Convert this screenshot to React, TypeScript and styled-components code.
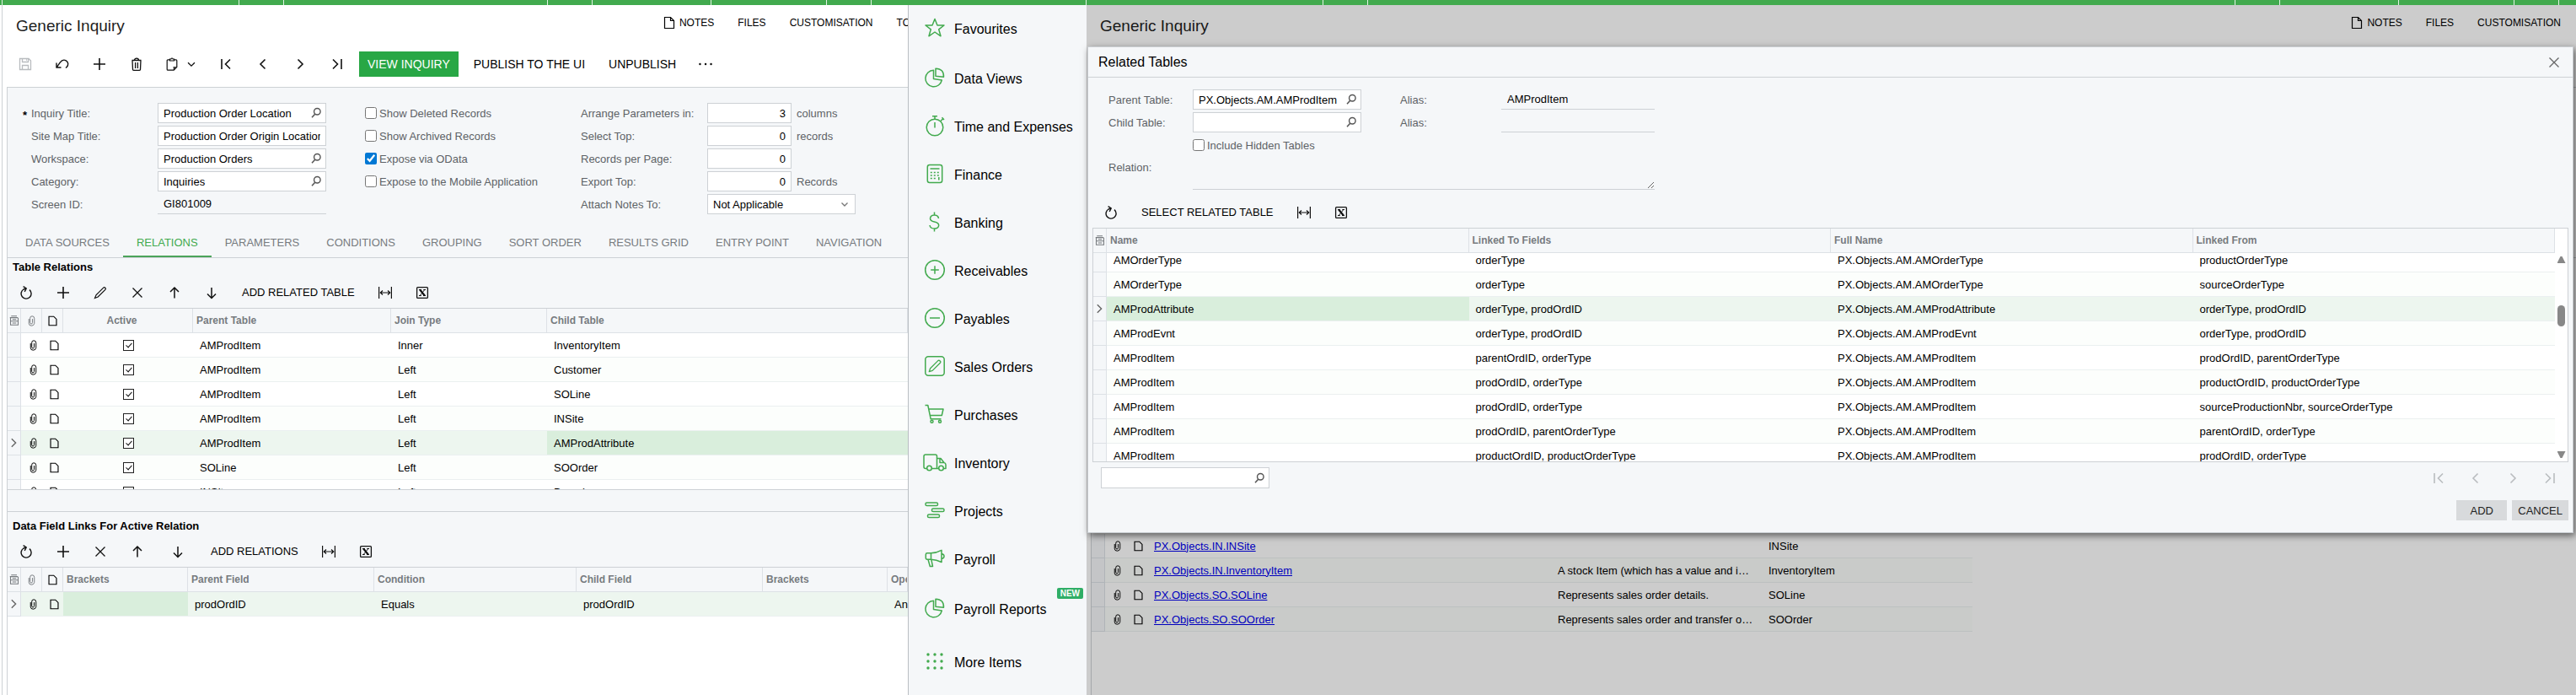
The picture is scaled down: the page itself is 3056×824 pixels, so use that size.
import React, { useLayoutEffect, useRef } from "react";
import styled, { createGlobalStyle, css } from "styled-components";

const GlobalStyle = createGlobalStyle`
  *, *::before, *::after { box-sizing: border-box; }
  body { margin: 0; background: #fff; color: #000; }
  body, button, input, select, textarea {
    font-family: "Liberation Sans", Arial, sans-serif;
    font-size: 13px;
  }
`;

const color = {
  brand: "#42aa4e",
  accent: "#28a745",
  surface: "#f5f7f9",
  line: "#cdd1d5",
  lineSoft: "#dde1e6",
  rowLine: "#ebf0f0",
  label: "#5d6266",
  muted: "#777b7f",
  rowSelected: "#edf6ef",
  cellActive: "#d9eedc",
};

/* ---------- icons ---------- */

const Svg = styled.svg`
  display: block;
  flex: none;
  fill: none;
  stroke: currentColor;
  stroke-width: 1.3;
`;

type IconName = keyof typeof shapes;

const shapes = {
  save: (
    <>
      <path d="M1.5 1.5H12L14.5 4V14.5H1.5Z" />
      <path d="M4.5 1.5V5.5H11.5V1.5M9 3H10M4.5 14.5V9.5H11.5V14.5" />
    </>
  ),
  undo: <path strokeWidth="1.4" d="M1 6.5V12H6.5M1.2 11.8L5.2 6.2C7.5 3 10 2.5 12.3 3.8C15.2 5.5 15.5 9 13.2 11.4L12 12.6" />,
  plus: <path strokeWidth="1.6" d="M8 1V15M1 8H15" />,
  trash: <path d="M2.5 3.5H13.5M5.5 3.5C5.5.3 10.5.3 10.5 3.5M3 3.5L3.5 14.5Q3.5 15.3 4.5 15.3H11.5Q12.5 15.3 12.5 14.5L13 3.5M6.6 6V13M9.4 6V13" />,
  clipboard: <path strokeWidth="1.2" d="M5.5 2.8H3.2Q2.2 2.8 2.2 3.8V14.2Q2.2 15.2 3.2 15.2H10.2L13.8 11.6V3.8Q13.8 2.8 12.8 2.8H10.5M5.5 4V2H6.8Q8 0 9.2 2H10.5V4ZM10.2 15.2Q10.8 13.5 10.3 11.8Q12 12.2 13.8 11.6" />,
  caret: <path strokeWidth="1.5" d="M3.5 6L8 10.5L12.5 6" />,
  smallCaret: <path strokeWidth="1.3" stroke="#777" d="M4.5 6.5L8 10L11.5 6.5" />,
  first: <path strokeWidth="1.6" d="M3 2V14M13 2.5L7.5 8L13 13.5" />,
  prev: <path strokeWidth="1.6" d="M10.5 2.5L5 8L10.5 13.5" />,
  next: <path strokeWidth="1.6" d="M5.5 2.5L11 8L5.5 13.5" />,
  last: <path strokeWidth="1.6" d="M13 2V14M3 2.5L8.5 8L3 13.5" />,
  dots: <path strokeWidth="2.4" strokeLinecap="round" d="M1.4 8H1.5M8 8H8.1M14.5 8H14.6" />,
  refresh: <path strokeWidth="1.4" d="M12 4.6A6 6 0 1 1 5 4L7.6 3.2M4.6.7L8.2 3L6.2 6.8" />,
  pencil: <path strokeWidth="1.2" d="M1.5 14.5L3 10.8L11.7 2.1Q12.7 1.2 13.8 2.2T13.9 4.3L5.2 13Z" />,
  cross: <path d="M2.5 2.5L13.5 13.5M13.5 2.5L2.5 13.5" />,
  up: <path strokeWidth="1.5" d="M8 14.5V2.5M3 7L8 2L13 7" />,
  down: <path strokeWidth="1.5" d="M8 2V14M3 9.5L8 14.5L13 9.5" />,
  fit: <path strokeWidth="1.2" d="M.6 1V15M15.4 1V15M2.5 8H13.5M5 5.5L2.3 8L5 10.5M11 5.5L13.7 8L11 10.5" />,
  excel: (
    <>
      <rect x="1.6" y="1.6" width="12.8" height="12.8" rx="1" />
      <path strokeWidth="2.2" d="M5.2 4.5L10.8 11.5" />
      <path strokeWidth="1" d="M10.8 4.5L5.2 11.5M4 4.5H7M9.3 4.5H12M4 11.5H6.8M9 11.5H12" />
    </>
  ),
  search: (
    <>
      <circle cx="9.5" cy="6" r="4.3" strokeWidth="1.6" />
      <path strokeWidth="1.8" d="M6.5 9.5L2.3 14" />
    </>
  ),
  clip: <path strokeWidth="1.2" d="M4 5V11.5Q4 15 7.8 15T12 11.5V4.5Q12 1 8.8 1T5.8 4V10.5Q5.8 12.3 7.5 12.3T9.3 10.5V5" />,
  note: <path strokeWidth="1.2" d="M2.5 1.5H9.5L13.5 5.5V14.5H2.5ZM9.5 1.5V5.5H13.5" />,
  page: <path strokeWidth="1.4" d="M2.5 1.5H9.5L13.5 5.5V14.5H2.5Z" />,
  form: (
    <>
      <path strokeWidth="1.4" d="M3 1H12M1 3.5H13.5M2 3.5V15H14V3.5M2 9H14" />
      <path strokeWidth="1.6" d="M5 6.3H11M5 12H11" />
    </>
  ),
} as const;

function Icon({ name, size = 16 }: { name: IconName; size?: number }) {
  return (
    <Svg width={size} height={size} viewBox="0 0 16 16" aria-hidden="true">
      {shapes[name]}
    </Svg>
  );
}

const dotRows = [6, 14, 22];

const menuShapes = {
  star: <path d="M14 3.5L17 11H25L18.7 15.8L21 23.8L14 19L7 23.8L9.3 15.8L3 11H11Z" />,
  pie: (
    <>
      <path d="M12.5 5.2A9.8 9.8 0 1 0 22.3 17L12.5 15.5Z" />
      <path d="M15 3.2V12.3L24.5 13.2Q24.8 3.4 15 3.2Z" />
    </>
  ),
  stopwatch: (
    <>
      <circle cx="14" cy="16" r="9.8" />
      <path d="M11 2.8H17M14 3V6M14 10V16.5M21 8.5L24 5.5M22.5 4.3L25 7" />
    </>
  ),
  calculator: (
    <>
      <rect x="5.3" y="3.5" width="17.4" height="21" rx="2.5" />
      <path d="M8.5 8H19.5" />
      <path strokeDasharray="2 2" d="M8.8 12.5H19.5M8.8 16H19.5M8.8 19.5H15.5" />
      <path d="M18.8 18V21.5" />
    </>
  ),
  dollar: <path d="M13.5 2.5V6M13.5 22V25.5M18.5 10Q18 6 13.5 6T8.5 10Q8.5 13 13.5 14T18.7 18Q18.5 22 13.5 22T8 18" />,
  plusCircle: (
    <>
      <circle cx="14" cy="14" r="11.3" />
      <path d="M14 9.2V18.8M9.2 14H18.8" />
    </>
  ),
  minusCircle: (
    <>
      <circle cx="14" cy="14" r="11.3" />
      <path d="M8 14H20" />
    </>
  ),
  edit: (
    <>
      <rect x="2.8" y="2.8" width="22.4" height="22.4" rx="3.5" />
      <path strokeWidth="1.3" d="M7.3 20.7L8.6 16.8L17.8 7.6Q18.9 6.7 20.2 7.9T20.4 10.2L11.2 19.4Z" />
    </>
  ),
  cart: (
    <>
      <path d="M2.5 3.5H5.8L9.2 19.8H21.5M6.8 8H24L22.3 15.5H8.3" />
      <circle cx="10.5" cy="22.8" r="1.5" />
      <circle cx="20" cy="22.8" r="1.5" />
    </>
  ),
  truck: (
    <>
      <path d="M4.5 21.5H3Q1 21.5 1 19.5V7Q1 5 3 5H14.8Q16.5 5 16.5 7V21.5H10.5M16.5 9.5H21L25 14.5Q27 15 27 17V21.5H24.5M18.5 21.5H16.5M20 9.5V14.5H25" />
      <circle cx="7.5" cy="21" r="2.8" />
      <circle cx="21.5" cy="21" r="2.8" />
    </>
  ),
  bars: (
    <>
      <rect x="3" y="5" width="14.5" height="3.6" rx="1.6" />
      <rect x="10.5" y="12" width="14.5" height="3.6" rx="1.6" />
      <rect x="5.5" y="19" width="14" height="3.6" rx="1.6" />
    </>
  ),
  megaphone: (
    <path d="M3.3 9.5Q3.3 7.8 5 7.8H9.5Q16 7.5 22 4.3V18.5Q16 15.5 9.5 15.2H5Q3.3 15.2 3.3 13.5ZM9.5 7.8V15.2M22 8.5Q25 9 25 11.5T22 14.5M6 15.2L8.3 23.5H11.5L9.8 15.2" />
  ),
  grid: (
    <g fill="currentColor" stroke="none">
      {dotRows.map((y) =>
        dotRows.map((x) => <circle key={`${x}-${y}`} cx={x} cy={y} r="1.7" />)
      )}
    </g>
  ),
} as const;

const MenuSvg = styled(Svg)`
  color: ${color.brand};
  stroke-width: 1.5;
  stroke-linejoin: round;
  margin-bottom: 4px;
`;

/* ---------- page frame ---------- */

const Layout = styled.div`
  display: grid;
  grid-template-columns: minmax(0, 1077fr) 212px minmax(0, 1767fr);
  min-height: 100vh;
`;

const Page = styled.main`
  position: relative;
  display: flex;
  flex-direction: column;
  min-width: 0;
`;

const TabStrip = styled.div`
  display: flex;
  flex: none;
  height: 6px;
  background: ${color.brand};
`;

const StripTab = styled.span<{ $width?: number }>`
  flex: ${(p) => (p.$width ? `none` : `1`)};
  width: ${(p) => (p.$width ? `${p.$width}px` : "auto")};
  border-right: 1px solid #e4f3e6;
  &:last-child { border-right: 0; }
`;

const PageBody = styled.div<{ $framed?: boolean }>`
  flex: 1;
  display: flex;
  flex-direction: column;
  min-width: 0;
  ${(p) => p.$framed && css`
    margin-left: 2px;
    border-left: 1px solid ${color.line};
  `}
`;

const Header = styled.header`
  display: flex;
  align-items: center;
  justify-content: space-between;
  height: 50px;
  padding-left: 16px;
  overflow: hidden;
`;

const Title = styled.h1`
  margin: 0;
  font-size: 19px;
  font-weight: 400;
  color: #222;
`;

const HeaderLinks = styled.div<{ $overhang: number }>`
  display: flex;
  flex: none;
  padding-bottom: 8px;
  margin-right: ${(p) => -p.$overhang}px;
`;

const HeaderLink = styled.button`
  display: flex;
  align-items: center;
  gap: 4px;
  padding: 0 14px;
  border: 0;
  background: none;
  font-size: 12px;
  line-height: 16px;
  white-space: nowrap;
`;

/* ---------- toolbars ---------- */

const Toolbar = styled.div<{ $main?: boolean }>`
  display: flex;
  align-items: center;
  flex: none;
  height: ${(p) => (p.$main ? 40 : 37)}px;
  ${(p) => p.$main && css`
    padding-left: 5px;
    margin-bottom: 7px;
  `}
`;

const IconButton = styled.button<{ $width?: number; $dim?: boolean }>`
  display: flex;
  align-items: center;
  justify-content: center;
  gap: 8px;
  flex: none;
  width: ${(p) => p.$width ?? 44}px;
  height: 30px;
  padding: 0;
  border: 0;
  background: none;
  color: ${(p) => (p.$dim ? "#b9bcbf" : "#111")};
`;

const ActionGroup = styled.div`
  display: flex;
  align-items: center;
  gap: 8px;
  margin-left: 4px;
`;

const ActionButton = styled.button<{ $primary?: boolean }>`
  flex: none;
  height: 30px;
  padding: 0 10px;
  border: 0;
  font-size: 14px;
  white-space: nowrap;
  background: ${(p) => (p.$primary ? color.accent : "none")};
  color: ${(p) => (p.$primary ? "#fff" : "#000")};
`;

const TextButton = styled.button`
  flex: none;
  height: 30px;
  padding: 0 14px;
  border: 0;
  background: none;
  white-space: nowrap;
`;

/* ---------- forms ---------- */

const Panel = styled.div`
  flex: 1;
  display: flex;
  flex-direction: column;
  min-width: 0;
  margin-left: 5px;
  border: solid ${color.line};
  border-width: 1px 0 0 1px;
`;

const FormArea = styled.form`
  display: flex;
  padding: 18px 0 15px 18px;
  background: ${color.surface};
`;

const FormColumn = styled.div<{ $width?: number }>`
  display: flex;
  flex-direction: column;
  gap: 3px;
  flex: none;
  ${(p) => p.$width && `width: ${p.$width}px;`}
`;

const FormRow = styled.div`
  display: flex;
  align-items: center;
  height: 24px;
`;

const Required = styled.span`
  width: 10px;
  padding-top: 4px;
  font-weight: 700;
`;

const FieldLabel = styled.label<{ $width: number }>`
  width: ${(p) => p.$width}px;
  color: ${color.label};
  white-space: nowrap;
`;

const FieldBox = styled.span<{ $width: number; $height?: number }>`
  display: flex;
  align-items: center;
  width: ${(p) => p.$width}px;
  height: ${(p) => p.$height ?? 24}px;
  padding-right: 4px;
  border: 1px solid ${color.line};
  background: #fff;
  color: #555;
`;

const FieldInput = styled.input<{ $right?: boolean }>`
  flex: 1;
  min-width: 0;
  height: 100%;
  padding: 0 2px 0 6px;
  border: 0;
  background: none;
  color: #000;
  text-align: ${(p) => (p.$right ? "right" : "left")};
`;

const PlainField = styled.input<{ $width: number }>`
  width: ${(p) => p.$width}px;
  height: 24px;
  padding: 0 7px;
  border: 0;
  border-bottom: 1px solid ${color.line};
  background: none;
`;

const SelectInput = styled.select`
  flex: 1;
  height: 100%;
  padding: 0 6px;
  border: 0;
  background: none;
  appearance: none;
`;

const Suffix = styled.span`
  margin-left: 6px;
  color: ${color.label};
`;

const CheckLabel = styled.label`
  display: flex;
  align-items: center;
  gap: 3px;
  height: 24px;
  color: ${color.label};
  white-space: nowrap;
`;

const NativeCheck = styled.input`
  width: 14px;
  height: 14px;
  margin: 0;
  accent-color: #0078d4;
`;

function TextField(props: {
  id: string;
  value: string;
  width?: number;
  height?: number;
  lookup?: boolean;
  right?: boolean;
  label?: string;
}) {
  return (
    <FieldBox $width={props.width ?? 200} $height={props.height}>
      <FieldInput id={props.id} defaultValue={props.value} $right={props.right} aria-label={props.label} />
      {props.lookup && <Icon name="search" size={14} />}
    </FieldBox>
  );
}

/* ---------- tabs and sections ---------- */

const Tabs = styled.div`
  display: flex;
  flex: none;
  height: 37px;
  padding-left: 5px;
  border-bottom: 1px solid ${color.line};
  background: ${color.surface};
  overflow: hidden;
`;

const Tab = styled.button<{ $active?: boolean }>`
  flex: none;
  height: 37px;
  padding: 0 16px;
  border: 0;
  background: none;
  white-space: nowrap;
  color: ${(p) => (p.$active ? color.brand : color.muted)};
  box-shadow: ${(p) => (p.$active ? `inset 0 -3px 0 #4ba35a` : "none")};
`;

const Section = styled.section<{ $ruled?: boolean }>`
  flex: none;
  background: ${color.surface};
  ${(p) => p.$ruled && css`
    padding-top: 6px;
    border-top: 1px solid ${color.line};
  `}
`;

const SectionTitle = styled.h2`
  margin: 0;
  padding-left: 6px;
  font-size: 13px;
  font-weight: 700;
  line-height: 22px;
`;

const Splitter = styled.div`
  flex: none;
  height: 25px;
  background: ${color.surface};
`;

/* ---------- data grids ---------- */

const GridFrame = styled.div<{ $height?: number }>`
  border-top: 1px solid ${color.line};
  background: #fff;
  overflow: hidden;
  ${(p) => p.$height && css`
    height: ${p.$height}px;
    border-bottom: 1px solid ${color.line};
  `}
`;

const Table = styled.table<{ $width?: number }>`
  width: ${(p) => (p.$width ? `${p.$width}px` : "100%")};
  table-layout: fixed;
  border-collapse: separate;
  border-spacing: 0;
`;

const Head = styled.th<{ $center?: boolean }>`
  position: sticky;
  top: 0;
  z-index: 1;
  height: 29px;
  padding: 0 0 0 4px;
  border: solid ${color.lineSoft};
  border-width: 0 1px 1px 0;
  background: ${color.surface};
  color: ${color.muted};
  font-size: 12px;
  text-align: left;
  white-space: nowrap;
  overflow: hidden;
  ${(p) => p.$center && css`
    padding: 0 14px 0 0;
    text-align: center;
  `}
`;

const IconHead = styled(Head)<{ $dark?: boolean }>`
  padding: 0;
  color: ${(p) => (p.$dark ? "#000" : color.muted)};
  ${Svg} { margin: 0 auto; }
`;

const Row = styled.tr<{ $selected?: boolean }>`
  background: ${(p) => (p.$selected ? color.rowSelected : "#fff")};
  &:nth-child(even) {
    background: ${(p) => (p.$selected ? color.rowSelected : "#fcfefc")};
  }
`;

const Cell = styled.td<{ $active?: boolean; $center?: boolean }>`
  height: 29px;
  padding: 0 10px 0 8px;
  border-bottom: 1px solid ${color.rowLine};
  white-space: nowrap;
  overflow: hidden;
  text-overflow: ellipsis;
  ${(p) => p.$active && `background: ${color.cellActive};`}
  ${(p) => p.$center && css`
    padding: 0;
    text-align: center;
  `}
`;

const EdgeCell = styled(Cell)`
  padding: 0;
  text-overflow: clip;
`;

const Marker = styled.td`
  height: 29px;
  padding: 0;
  border: solid ${color.lineSoft};
  border-width: 0 1px 1px 0;
  background: ${color.surface};
  color: #666;
`;

const IconCell = styled(Cell)`
  padding: 0 0 0 3px;
  text-overflow: clip;
  ${Svg} { margin: 0 auto; }
`;

const EdgeText = styled.span`
  padding-left: 8px;
`;

const GridCheck = styled.input`
  position: relative;
  display: block;
  width: 13px;
  height: 13px;
  margin: 0 auto;
  border: 1px solid #222;
  background: #fff;
  appearance: none;
  &:checked::after {
    content: "";
    position: absolute;
    left: 4px;
    top: 1px;
    width: 4px;
    height: 7px;
    border: solid #111;
    border-width: 0 1px 1px 0;
    transform: rotate(42deg);
  }
`;

function AttachHeads() {
  return (
    <>
      <IconHead><Icon name="form" size={12} /></IconHead>
      <IconHead><Icon name="clip" size={13} /></IconHead>
      <IconHead $dark><Icon name="page" size={13} /></IconHead>
    </>
  );
}

function AttachCells({ selected }: { selected?: boolean }) {
  return (
    <>
      <Marker>{selected && <Icon name="next" size={14} />}</Marker>
      <IconCell><Icon name="clip" size={13} /></IconCell>
      <IconCell><Icon name="page" size={13} /></IconCell>
    </>
  );
}

function Columns({ widths }: { widths: (number | undefined)[] }) {
  return (
    <colgroup>
      {widths.map((w, i) => (
        <col key={i} width={w} />
      ))}
    </colgroup>
  );
}

/* ---------- side menu ---------- */

const SideMenu = styled.nav`
  display: flex;
  flex-direction: column;
  border-left: 1px solid #b9bec3;
  background: ${color.surface};
`;

const MenuStrip = styled(TabStrip)`
  margin-left: -1px;
  border-right: 1px solid #e4f3e6;
`;

const MenuItem = styled.a<{ $size: "normal" | "tall" | "last" }>`
  position: relative;
  display: flex;
  align-items: center;
  gap: 9px;
  height: ${(p) => ({ normal: 57, tall: 59, last: 70 }[p.$size])}px;
  padding-left: 17px;
  padding-top: ${(p) => (p.$size === "tall" ? 3 : 0)}px;
  color: #000;
  font-size: 16px;
  text-decoration: none;
  white-space: nowrap;
`;

const Badge = styled.span`
  position: absolute;
  top: 5px;
  right: 4px;
  padding: 0 4px;
  border-radius: 2px;
  background: #2fae66;
  color: #fff;
  font-size: 10px;
  font-weight: 700;
  line-height: 13px;
`;

/* ---------- dialog ---------- */

const Shade = styled.div`
  position: absolute;
  inset: 6px 0 0 0;
  background: rgba(0, 0, 0, 0.2);
`;

const Dialog = styled.div`
  position: absolute;
  top: 55px;
  left: 1px;
  right: 3px;
  border: 1px solid #c9cdd1;
  background: ${color.surface};
  box-shadow: 2px 3px 8px rgba(0, 0, 0, 0.55);
`;

const DialogHeader = styled.div`
  display: flex;
  align-items: center;
  justify-content: space-between;
  height: 36px;
  padding: 0 0 0 12px;
  border-bottom: 1px solid ${color.line};
`;

const DialogTitle = styled.h2`
  margin: 0;
  font-size: 16px;
  font-weight: 400;
`;

const CloseButton = styled(IconButton)`
  color: #666;
`;

const DialogForm = styled.form`
  display: flex;
  flex-direction: column;
  gap: 3px;
  padding: 14px 0 8px 24px;
`;

const Indented = styled.div`
  padding-left: 100px;
`;

const AliasGroup = styled.div`
  display: flex;
  align-items: center;
  margin-left: 46px;
`;

const RelationRow = styled.div`
  display: flex;
  align-items: flex-start;
  line-height: 24px;
`;

const RelationText = styled.textarea`
  width: 548px;
  height: 38px;
  padding: 0;
  border: 0;
  border-bottom: 1px solid ${color.line};
  background: none;
`;

const DialogToolbar = styled(Toolbar)`
  padding-left: 5px;
`;

const ScrollFrame = styled.div`
  display: flex;
  height: 278px;
  margin: 0 5px;
  border: 1px solid ${color.line};
  background: #fff;
`;

const ScrollView = styled.div`
  flex: 1;
  min-width: 0;
  overflow: hidden;
`;

const ScrollBar = styled.div`
  display: flex;
  flex-direction: column;
  align-items: center;
  width: 15px;
  padding: 33px 0 4px;
`;

const ScrollArrow = styled.span<{ $down?: boolean }>`
  width: 10px;
  height: 8px;
  background: #888;
  clip-path: ${(p) =>
    p.$down ? "polygon(0 0, 100% 0, 60% 100%, 40% 100%)" : "polygon(40% 0, 60% 0, 100% 100%, 0 100%)"};
`;

const ScrollTrack = styled.span`
  flex: 1;
  padding-top: 50px;
`;

const ScrollThumb = styled.span`
  display: block;
  width: 9px;
  height: 25px;
  border-radius: 5px;
  background: #888;
`;

const DialogFooter = styled.div`
  display: flex;
  align-items: center;
  justify-content: space-between;
  height: 37px;
  padding: 0 5px 0 15px;
`;

const Pager = styled.div`
  display: flex;
`;

const DialogActions = styled.div`
  display: flex;
  justify-content: flex-end;
  gap: 6px;
  padding: 8px 5px 14px;
`;

const DialogButton = styled.button`
  min-width: 60px;
  height: 24px;
  padding: 0 7px;
  border: 0;
  background: #d8dadc;
  color: #222;
`;

const BackForm = styled.div`
  flex: none;
  height: 202px;
  border-bottom: 1px solid ${color.line};
`;

const BackGrid = styled.div`
  padding-top: 327px;
`;

const ObjectLink = styled.a`
  color: #0000ee;
`;

/* ---------- data ---------- */

const tabs = [
  "DATA SOURCES", "RELATIONS", "PARAMETERS", "CONDITIONS", "GROUPING",
  "SORT ORDER", "RESULTS GRID", "ENTRY POINT", "NAVIGATION",
];

const relations = [
  ["AMProdItem", "Inner", "InventoryItem"],
  ["AMProdItem", "Left", "Customer"],
  ["AMProdItem", "Left", "SOLine"],
  ["AMProdItem", "Left", "INSite"],
  ["AMProdItem", "Left", "AMProdAttribute"],
  ["SOLine", "Left", "SOOrder"],
  ["INSite", "Left", "Branch"],
];

const related = [
  ["AMOrderType", "orderType", "productOrderType"],
  ["AMOrderType", "orderType", "sourceOrderType"],
  ["AMProdAttribute", "orderType, prodOrdID", "orderType, prodOrdID"],
  ["AMProdEvnt", "orderType, prodOrdID", "orderType, prodOrdID"],
  ["AMProdItem", "parentOrdID, orderType", "prodOrdID, parentOrderType"],
  ["AMProdItem", "prodOrdID, orderType", "productOrdID, productOrderType"],
  ["AMProdItem", "prodOrdID, orderType", "sourceProductionNbr, sourceOrderType"],
  ["AMProdItem", "prodOrdID, parentOrderType", "parentOrdID, orderType"],
  ["AMProdItem", "productOrdID, productOrderType", "prodOrdID, orderType"],
];

const sources = [
  ["PX.Objects.IN.INSite", "", "INSite"],
  ["PX.Objects.IN.InventoryItem", "A stock Item (which has a value and is stored in a warehouse)", "InventoryItem"],
  ["PX.Objects.SO.SOLine", "Represents sales order details.", "SOLine"],
  ["PX.Objects.SO.SOOrder", "Represents sales order and transfer order documents.", "SOOrder"],
];

const menu: { label: string; icon: keyof typeof menuShapes; size?: "tall" | "last"; badge?: string }[] = [
  { label: "Favourites", icon: "star" },
  { label: "Data Views", icon: "pie", size: "tall" },
  { label: "Time and Expenses", icon: "stopwatch" },
  { label: "Finance", icon: "calculator" },
  { label: "Banking", icon: "dollar" },
  { label: "Receivables", icon: "plusCircle" },
  { label: "Payables", icon: "minusCircle" },
  { label: "Sales Orders", icon: "edit" },
  { label: "Purchases", icon: "cart" },
  { label: "Inventory", icon: "truck" },
  { label: "Projects", icon: "bars" },
  { label: "Payroll", icon: "megaphone" },
  { label: "Payroll Reports", icon: "pie", size: "tall", badge: "NEW" },
  { label: "More Items", icon: "grid", size: "last" },
];

/* ---------- screens ---------- */

function PageHeader({ tools }: { tools?: boolean }) {
  return (
    <Header>
      <Title>Generic Inquiry</Title>
      <HeaderLinks $overhang={tools ? 41 : -4}>
        <HeaderLink><Icon name="note" />NOTES</HeaderLink>
        <HeaderLink>FILES</HeaderLink>
        <HeaderLink>CUSTOMISATION</HeaderLink>
        {tools && <HeaderLink>TOOLS</HeaderLink>}
      </HeaderLinks>
    </Header>
  );
}

function MainToolbar() {
  return (
    <Toolbar $main>
      <IconButton $dim aria-label="Save"><Icon name="save" /></IconButton>
      <IconButton aria-label="Undo"><Icon name="undo" /></IconButton>
      <IconButton aria-label="Add"><Icon name="plus" /></IconButton>
      <IconButton aria-label="Delete"><Icon name="trash" /></IconButton>
      <IconButton $width={62} aria-label="Clipboard"><Icon name="clipboard" /><Icon name="caret" size={14} /></IconButton>
      <IconButton aria-label="First"><Icon name="first" /></IconButton>
      <IconButton aria-label="Previous"><Icon name="prev" /></IconButton>
      <IconButton aria-label="Next"><Icon name="next" /></IconButton>
      <IconButton aria-label="Last"><Icon name="last" /></IconButton>
      <ActionGroup>
        <ActionButton $primary>VIEW INQUIRY</ActionButton>
        <ActionButton>PUBLISH TO THE UI</ActionButton>
        <ActionButton>UNPUBLISH</ActionButton>
        <IconButton $width={34} aria-label="More"><Icon name="dots" /></IconButton>
      </ActionGroup>
    </Toolbar>
  );
}

function InquiryForm() {
  const left = [
    { id: "title", label: "Inquiry Title:", value: "Production Order Location", lookup: true, required: true },
    { id: "sitemap", label: "Site Map Title:", value: "Production Order Origin Location" },
    { id: "workspace", label: "Workspace:", value: "Production Orders", lookup: true },
    { id: "category", label: "Category:", value: "Inquiries", lookup: true },
  ];
  const numbers = [
    { id: "arrange", label: "Arrange Parameters in:", value: "3", suffix: "columns" },
    { id: "top", label: "Select Top:", value: "0", suffix: "records" },
    { id: "perpage", label: "Records per Page:", value: "0", suffix: "" },
    { id: "export", label: "Export Top:", value: "0", suffix: "Records" },
  ];
  const checks = ["Show Deleted Records", "Show Archived Records", "Expose via OData", "Expose to the Mobile Application"];
  return (
    <FormArea>
      <FormColumn $width={406}>
        {left.map((f) => (
          <FormRow key={f.id}>
            <Required>{f.required ? "*" : ""}</Required>
            <FieldLabel htmlFor={f.id} $width={150}>{f.label}</FieldLabel>
            <TextField id={f.id} value={f.value} lookup={f.lookup} />
          </FormRow>
        ))}
        <FormRow>
          <Required />
          <FieldLabel htmlFor="screen" $width={150}>Screen ID:</FieldLabel>
          <PlainField id="screen" $width={200} defaultValue="GI801009" readOnly />
        </FormRow>
      </FormColumn>
      <FormColumn $width={256}>
        {checks.map((label) => (
          <CheckLabel key={label}>
            <NativeCheck type="checkbox" defaultChecked={label === "Expose via OData"} />
            {label}
          </CheckLabel>
        ))}
      </FormColumn>
      <FormColumn>
        {numbers.map((f) => (
          <FormRow key={f.id}>
            <FieldLabel htmlFor={f.id} $width={150}>{f.label}</FieldLabel>
            <TextField id={f.id} value={f.value} width={100} right />
            <Suffix>{f.suffix}</Suffix>
          </FormRow>
        ))}
        <FormRow>
          <FieldLabel htmlFor="notes" $width={150}>Attach Notes To:</FieldLabel>
          <FieldBox $width={176}>
            <SelectInput id="notes" defaultValue="Not Applicable">
              <option>Not Applicable</option>
            </SelectInput>
            <Icon name="smallCaret" />
          </FieldBox>
        </FormRow>
      </FormColumn>
    </FormArea>
  );
}

function RelationsGrid() {
  return (
    <GridFrame $height={216}>
      <Table>
        <Columns widths={[16, 25, 25, 154, 235, 185, undefined]} />
        <thead>
          <tr>
            <AttachHeads />
            <Head $center>Active</Head>
            <Head>Parent Table</Head>
            <Head>Join Type</Head>
            <Head>Child Table</Head>
          </tr>
        </thead>
        <tbody>
          {relations.map(([parent, join, child], i) => (
            <Row key={child} $selected={i === 4}>
              <AttachCells selected={i === 4} />
              <Cell $center><GridCheck type="checkbox" defaultChecked aria-label={`${child} active`} /></Cell>
              <Cell>{parent}</Cell>
              <Cell>{join}</Cell>
              <Cell $active={i === 4}>{child}</Cell>
            </Row>
          ))}
        </tbody>
      </Table>
    </GridFrame>
  );
}

function LinksGrid() {
  return (
    <GridFrame>
      <Table>
        <Columns widths={[16, 25, 25, 148, 221, 240, 221, 148, undefined]} />
        <thead>
          <tr>
            <AttachHeads />
            <Head>Brackets</Head>
            <Head>Parent Field</Head>
            <Head>Condition</Head>
            <Head>Child Field</Head>
            <Head>Brackets</Head>
            <Head>Operator</Head>
          </tr>
        </thead>
        <tbody>
          <Row $selected>
            <AttachCells selected />
            <Cell $active />
            <Cell>prodOrdID</Cell>
            <Cell>Equals</Cell>
            <Cell>prodOrdID</Cell>
            <Cell />
            <EdgeCell><EdgeText>And</EdgeText></EdgeCell>
          </Row>
        </tbody>
      </Table>
    </GridFrame>
  );
}

function InquiryPage() {
  return (
    <Page>
      <TabStrip>
        {[3, 281, 53, 313, 53, 141, 137, 53].map((w, i) => <StripTab key={i} $width={w} />)}
        <StripTab />
      </TabStrip>
      <PageBody $framed>
        <PageHeader tools />
        <MainToolbar />
        <Panel>
          <InquiryForm />
          <Tabs>
            {tabs.map((t) => <Tab key={t} $active={t === "RELATIONS"}>{t}</Tab>)}
          </Tabs>
          <Section>
            <SectionTitle>Table Relations</SectionTitle>
            <Toolbar>
              <IconButton aria-label="Refresh"><Icon name="refresh" /></IconButton>
              <IconButton aria-label="Add row"><Icon name="plus" /></IconButton>
              <IconButton aria-label="Edit row"><Icon name="pencil" /></IconButton>
              <IconButton aria-label="Delete row"><Icon name="cross" /></IconButton>
              <IconButton aria-label="Move up"><Icon name="up" /></IconButton>
              <IconButton aria-label="Move down"><Icon name="down" /></IconButton>
              <TextButton>ADD RELATED TABLE</TextButton>
              <IconButton aria-label="Fit columns"><Icon name="fit" /></IconButton>
              <IconButton aria-label="Export"><Icon name="excel" /></IconButton>
            </Toolbar>
            <RelationsGrid />
          </Section>
          <Splitter />
          <Section $ruled>
            <SectionTitle>Data Field Links For Active Relation</SectionTitle>
            <Toolbar>
              <IconButton aria-label="Refresh"><Icon name="refresh" /></IconButton>
              <IconButton aria-label="Add row"><Icon name="plus" /></IconButton>
              <IconButton aria-label="Delete row"><Icon name="cross" /></IconButton>
              <IconButton aria-label="Move up"><Icon name="up" /></IconButton>
              <IconButton $width={51} aria-label="Move down"><Icon name="down" /></IconButton>
              <TextButton>ADD RELATIONS</TextButton>
              <IconButton aria-label="Fit columns"><Icon name="fit" /></IconButton>
              <IconButton aria-label="Export"><Icon name="excel" /></IconButton>
            </Toolbar>
            <LinksGrid />
          </Section>
        </Panel>
      </PageBody>
    </Page>
  );
}

function Navigation() {
  return (
    <SideMenu>
      <MenuStrip />
      {menu.map((item) => (
        <MenuItem key={item.label} href="#" $size={item.size ?? "normal"}>
          <MenuSvg width="28" height="28" viewBox="0 0 28 28" aria-hidden="true">
            {menuShapes[item.icon]}
          </MenuSvg>
          {item.label}
          {item.badge && <Badge>{item.badge}</Badge>}
        </MenuItem>
      ))}
    </SideMenu>
  );
}

function RelatedTablesDialog() {
  const view = useRef<HTMLDivElement>(null);
  useLayoutEffect(() => {
    if (view.current) view.current.scrollTop = 6;
  }, []);
  return (
    <Dialog role="dialog" aria-label="Related Tables">
      <DialogHeader>
        <DialogTitle>Related Tables</DialogTitle>
        <CloseButton aria-label="Close"><Icon name="cross" /></CloseButton>
      </DialogHeader>
      <DialogForm>
        <FormRow>
          <FieldLabel htmlFor="parent" $width={100}>Parent Table:</FieldLabel>
          <TextField id="parent" value="PX.Objects.AM.AMProdItem" lookup />
          <AliasGroup>
            <FieldLabel htmlFor="alias1" $width={120}>Alias:</FieldLabel>
            <PlainField id="alias1" $width={182} defaultValue="AMProdItem" />
          </AliasGroup>
        </FormRow>
        <FormRow>
          <FieldLabel htmlFor="child" $width={100}>Child Table:</FieldLabel>
          <TextField id="child" value="" lookup />
          <AliasGroup>
            <FieldLabel htmlFor="alias2" $width={120}>Alias:</FieldLabel>
            <PlainField id="alias2" $width={182} />
          </AliasGroup>
        </FormRow>
        <Indented>
          <CheckLabel>
            <NativeCheck type="checkbox" />
            Include Hidden Tables
          </CheckLabel>
        </Indented>
        <RelationRow>
          <FieldLabel htmlFor="relation" $width={100}>Relation:</FieldLabel>
          <RelationText id="relation" />
        </RelationRow>
      </DialogForm>
      <DialogToolbar>
        <IconButton aria-label="Refresh"><Icon name="refresh" /></IconButton>
        <TextButton>SELECT RELATED TABLE</TextButton>
        <IconButton aria-label="Fit columns"><Icon name="fit" /></IconButton>
        <IconButton aria-label="Export"><Icon name="excel" /></IconButton>
      </DialogToolbar>
      <ScrollFrame>
        <ScrollView ref={view}>
          <Table>
            <Columns widths={[16, undefined, undefined, undefined, undefined]} />
            <thead>
              <tr>
                <IconHead><Icon name="form" size={12} /></IconHead>
                <Head>Name</Head>
                <Head>Linked To Fields</Head>
                <Head>Full Name</Head>
                <Head>Linked From</Head>
              </tr>
            </thead>
            <tbody>
              {related.map(([name, to, from], i) => (
                <Row key={i} $selected={i === 2}>
                  <Marker>{i === 2 && <Icon name="next" size={14} />}</Marker>
                  <Cell $active={i === 2}>{name}</Cell>
                  <Cell>{to}</Cell>
                  <Cell>{`PX.Objects.AM.${name}`}</Cell>
                  <Cell>{from}</Cell>
                </Row>
              ))}
            </tbody>
          </Table>
        </ScrollView>
        <ScrollBar aria-hidden="true">
          <ScrollArrow />
          <ScrollTrack><ScrollThumb /></ScrollTrack>
          <ScrollArrow $down />
        </ScrollBar>
      </ScrollFrame>
      <DialogFooter>
        <TextField id="find" label="Search tables" value="" height={25} lookup />
        <Pager>
          <IconButton $dim aria-label="First page"><Icon name="first" /></IconButton>
          <IconButton $dim aria-label="Previous page"><Icon name="prev" /></IconButton>
          <IconButton $dim aria-label="Next page"><Icon name="next" /></IconButton>
          <IconButton $dim aria-label="Last page"><Icon name="last" /></IconButton>
        </Pager>
      </DialogFooter>
      <DialogActions>
        <DialogButton>ADD</DialogButton>
        <DialogButton>CANCEL</DialogButton>
      </DialogActions>
    </Dialog>
  );
}

function SourcesPage() {
  return (
    <Page>
      <TabStrip>
        <StripTab $width={281} />
        <StripTab $width={53} />
        <StripTab />
        {[53, 141, 137, 53, 20].map((w, i) => <StripTab key={i} $width={w} />)}
      </TabStrip>
      <PageBody>
        <PageHeader />
        <Toolbar $main />
        <Panel>
          <BackForm />
          <BackGrid>
            <Table $width={1045}>
              <Columns widths={[16, 25, 25, 479, 250, 250]} />
              <tbody>
                {sources.map(([link, text, alias]) => (
                  <Row key={link}>
                    <AttachCells />
                    <Cell><ObjectLink href="#">{link}</ObjectLink></Cell>
                    <Cell>{text}</Cell>
                    <Cell>{alias}</Cell>
                  </Row>
                ))}
              </tbody>
            </Table>
          </BackGrid>
        </Panel>
      </PageBody>
      <Shade />
      <RelatedTablesDialog />
    </Page>
  );
}

export default function App() {
  return (
    <>
      <GlobalStyle />
      <Layout>
        <InquiryPage />
        <Navigation />
        <SourcesPage />
      </Layout>
    </>
  );
}
